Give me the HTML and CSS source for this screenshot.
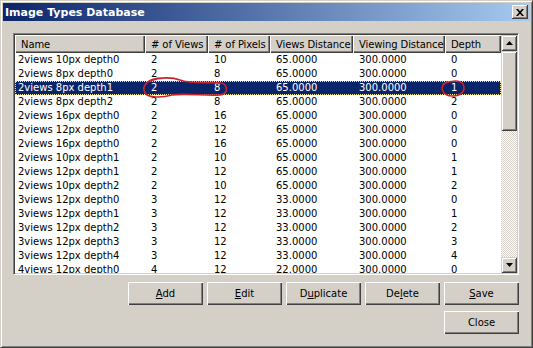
FILE: index.html
```html
<!DOCTYPE html>
<html lang="en">
<head>
    <meta charset="UTF-8">
    <title>Image Types Database</title>
    <link rel="stylesheet" href="styles.css">
</head>
<body>
    <div class="window">
        <div class="titlebar">
            <span class="title">Image Types Database</span>
            <button class="close-x" aria-label="Close">
                <svg width="8" height="7" viewBox="0 0 8 7"><path d="M0 0h2l2 2.2L6 0h2L5 3.5 8 7H6L4 4.8 2 7H0l3-3.5z" fill="#000"/></svg>
            </button>
        </div>

        <div class="content">
            <div class="listbox">
                <div class="grid-area">
                    <div class="row header">
                        <div class="hcell">Name</div>
                        <div class="hcell"># of Views</div>
                        <div class="hcell"># of Pixels</div>
                        <div class="hcell">Views Distance</div>
                        <div class="hcell">Viewing Distance</div>
                        <div class="hcell">Depth</div>
                    </div>
                    <div id="rows"></div>
                </div>
                <div class="scrollbar">
                    <div class="sb-btn">
                        <svg width="7" height="4" viewBox="0 0 7 4"><path d="M3.5 0L7 4H0z" fill="#000"/></svg>
                    </div>
                    <div class="sb-thumb"></div>
                    <div class="sb-track"></div>
                    <div class="sb-btn">
                        <svg width="7" height="4" viewBox="0 0 7 4"><path d="M0 0h7L3.5 4z" fill="#000"/></svg>
                    </div>
                </div>
            </div>

            <div class="buttons">
                <button class="button"><u>A</u>dd</button>
                <button class="button"><u>E</u>dit</button>
                <button class="button">D<u>u</u>plicate</button>
                <button class="button">De<u>l</u>ete</button>
                <button class="button"><u>S</u>ave</button>
            </div>
            <div class="buttons">
                <button class="button">Close</button>
            </div>
        </div>

        <!-- red marker scribbles on top of the screenshot -->
        <svg class="marks" width="533" height="348" viewBox="0 0 533 348">
            <path d="M162 78 C148 78,141 86,145 93 C148 98,162 98,172 95 C185 93,205 96,220 95 C228 94,229 85,221 83 C206 82,190 84,180 80 C172 77,160 77,150 81" />
            <path d="M447 82 C439 86,441 96,453 96 C462 96,466 90,463 84 C460 80,452 80,443 84" />
        </svg>
    </div>

<script>
    const data = [
        ['2views 10px depth0', '2', '10', '65.0000', '300.0000', '0'],
        ['2views 8px depth0', '2', '8', '65.0000', '300.0000', '0'],
        ['2views 8px depth1', '2', '8', '65.0000', '300.0000', '1'],
        ['2views 8px depth2', '2', '8', '65.0000', '300.0000', '2'],
        ['2views 16px depth0', '2', '16', '65.0000', '300.0000', '0'],
        ['2views 12px depth0', '2', '12', '65.0000', '300.0000', '0'],
        ['2views 16px depth0', '2', '16', '65.0000', '300.0000', '0'],
        ['2views 10px depth1', '2', '10', '65.0000', '300.0000', '1'],
        ['2views 12px depth1', '2', '12', '65.0000', '300.0000', '1'],
        ['2views 10px depth2', '2', '10', '65.0000', '300.0000', '2'],
        ['3views 12px depth0', '3', '12', '33.0000', '300.0000', '0'],
        ['3views 12px depth1', '3', '12', '33.0000', '300.0000', '1'],
        ['3views 12px depth2', '3', '12', '33.0000', '300.0000', '2'],
        ['3views 12px depth3', '3', '12', '33.0000', '300.0000', '3'],
        ['3views 12px depth4', '3', '12', '33.0000', '300.0000', '4'],
        ['4views 12px depth0', '4', '12', '22.0000', '300.0000', '0']
    ];
    const selected = 2;

    const rows = document.getElementById('rows');
    data.forEach((r, i) => {
        const row = document.createElement('div');
        row.className = 'row item' + (i === selected ? ' selected' : '');
        r.forEach(v => {
            const c = document.createElement('div');
            c.className = 'cell';
            c.textContent = v;
            row.appendChild(c);
        });
        rows.appendChild(row);
    });
</script>
</body>
</html>
```

FILE: styles.css
```css
body {
    margin: 0;
    background-color: #d4d0c8;
    font-family: Tahoma, "DejaVu Sans", sans-serif;
    font-size: 10px;
    color: #000;
}

.window {
    position: relative;
    width: 533px;
    height: 348px;
    box-sizing: border-box;
    padding: 1px;
    border: 1px solid;
    border-color: #d4d0c8 #404040 #404040 #d4d0c8;
    box-shadow: inset 1px 1px 0 #fff, inset -1px -1px 0 #808080;
    background-color: #d4d0c8;
}

.titlebar {
    margin: 1px 0 0 1px;
    width: 527px;
    height: 18px;
    display: flex;
    align-items: center;
    justify-content: space-between;
    background: linear-gradient(to right, #0a246a, #a6caf0);
}

.title {
    padding-left: 2px;
    color: #fff;
    font-weight: bold;
    font-size: 11px;
}

.close-x {
    width: 16px;
    height: 14px;
    margin-right: 2px;
    padding: 0;
    display: flex;
    align-items: center;
    justify-content: center;
    background-color: #d4d0c8;
    border: none;
    box-shadow: inset -1px -1px 0 #404040, inset 1px 1px 0 #fff, inset -2px -2px 0 #808080;
}

.content {
    padding: 12px 0 0 11px;
    width: 506px;
}

.listbox {
    width: 506px;
    height: 242px;
    box-sizing: border-box;
    display: flex;
    border: 1px solid;
    border-color: #808080 #fff #fff #808080;
    box-shadow: inset 1px 1px 0 #404040, inset -1px -1px 0 #d4d0c8;
    padding: 1px;
    background-color: #fff;
}

.grid-area {
    width: 486px;
    overflow: hidden;
}

.row {
    display: grid;
    grid-template-columns: 130px 63px 62px 83px 92px 56px;
}

.header {
    height: 18px;
}

.hcell {
    background-color: #d4d0c8;
    box-shadow: inset 1px 1px 0 #fff, inset -1px -1px 0 #404040, inset -2px -2px 0 #808080;
    padding: 3px 0 0 6px;
    line-height: 13px;
    letter-spacing: -0.1px;
    white-space: nowrap;
    overflow: hidden;
}

.item {
    height: 14px;
    line-height: 14px;
}

.cell {
    padding-left: 6px;
    white-space: nowrap;
}

.cell:first-child {
    padding-left: 3px;
}

.selected {
    background-color: #0a246a;
    color: #fff;
    outline: 1px dotted #f4e8a0;
    outline-offset: -1px;
}

.scrollbar {
    width: 16px;
    display: flex;
    flex-direction: column;
}

.sb-btn {
    height: 16px;
    display: flex;
    align-items: center;
    justify-content: center;
    background-color: #d4d0c8;
    box-shadow: inset 1px 1px 0 #d4d0c8, inset -1px -1px 0 #404040, inset 2px 2px 0 #fff, inset -2px -2px 0 #808080;
}

.sb-thumb {
    height: 80px;
    background-color: #d4d0c8;
    box-shadow: inset 1px 1px 0 #d4d0c8, inset -1px -1px 0 #404040, inset 2px 2px 0 #fff, inset -2px -2px 0 #808080;
}

.sb-track {
    flex: 1;
    background-image: conic-gradient(#fff 25%, #d4d0c8 0 50%, #fff 0 75%, #d4d0c8 0);
    background-size: 2px 2px;
}

.buttons {
    display: flex;
    justify-content: flex-end;
    gap: 4px;
    margin-top: 7px;
}

.buttons + .buttons {
    margin-top: 6px;
}

.button {
    width: 75px;
    height: 23px;
    padding: 0;
    font-family: inherit;
    font-size: 10px;
    color: #000;
    background-color: #d4d0c8;
    border: none;
    box-shadow: inset 1px 1px 0 #fff, inset -1px -1px 0 #404040, inset -2px -2px 0 #808080;
}

.marks {
    position: absolute;
    left: -1px;
    top: -1px;
    pointer-events: none;
}

.marks path {
    fill: none;
    stroke: #c8242c;
    stroke-width: 1.6;
    stroke-linecap: round;
}
```
